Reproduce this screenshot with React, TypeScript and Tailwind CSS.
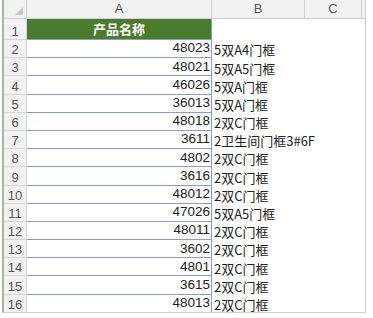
import React from 'react';

const rows: [string, string][] = [
  ['48023', '5双A4门框'],
  ['48021', '5双A5门框'],
  ['46026', '5双A门框'],
  ['36013', '5双A门框'],
  ['48018', '2双C门框'],
  ['3611', '2卫生间门框3#6F'],
  ['4802', '2双C门框'],
  ['3616', '2双C门框'],
  ['48012', '2双C门框'],
  ['47026', '5双A5门框'],
  ['48011', '2双C门框'],
  ['3602', '2双C门框'],
  ['4801', '2双C门框'],
  ['3615', '2双C门框'],
  ['48013', '2双C门框'],
];

const num = { fontFamily: '"Liberation Sans", Arial, sans-serif' };
const cjk = { fontFamily: '"Noto Sans CJK SC", "Liberation Sans", sans-serif' };

function RowNum({ n, h }: { n: number; h: string }) {
  return (
    <div
      className={`w-[23px] ${h} shrink-0 bg-[#f2f2f2] border-r border-b border-[#d6d6d6] flex items-end justify-center text-[13px] leading-[15px] text-[#555]`}
      style={num}
    >
      {n}
    </div>
  );
}

export default function App() {
  return (
    <div className="w-[373px] h-[318px] bg-white overflow-hidden">
      <div className="ml-[2px] w-[364px] h-[313px] border-l-2 border-[#a8b8a0] border-r border-b border-r-[#d0d0d0] border-b-[#d0d0d0] flex flex-col overflow-hidden">
        {/* header */}
        <div className="flex h-[19px] shrink-0 bg-[#f2f2f2] border-b border-[#d0d0d0] text-[13px] text-[#555]" style={num}>
          <div className="w-[23px] border-r border-[#d0d0d0] relative">
            <div className="absolute right-[3px] bottom-[3px] w-0 h-0 border-l-[8px] border-l-transparent border-b-[8px] border-b-[#c8c8c8]" />
          </div>
          <div className="w-[185px] border-r border-[#d0d0d0] flex items-center justify-center">A</div>
          <div className="w-[93px] border-r border-[#d0d0d0] flex items-center justify-center">B</div>
          <div className="w-[57px] border-r border-[#d0d0d0] flex items-center justify-center">C</div>
        </div>
        {/* row 1 */}
        <div className="flex h-[21px] shrink-0">
          <RowNum n={1} h="h-[21px]" />
          <div
            className="w-[185px] bg-[#4b7b2c] border-r border-b border-[#8d9bc9] flex items-center justify-center text-white font-bold text-[13px]"
            style={cjk}
          >
            产品名称
          </div>
        </div>
        {rows.map(([a, b], i) => (
          <div key={i} className="flex h-[18.2px] shrink-0">
            <RowNum n={i + 2} h="h-[18.2px]" />
            <div
              className="w-[185px] border-r border-b border-[#8d9bc9] flex items-center justify-end pr-[1px] text-[13.5px] text-[#222]"
              style={num}
            >
              {a}
            </div>
            <div className="pl-[2px] pt-[2px] flex items-center whitespace-nowrap text-[13px] text-[#222]" style={cjk}>
              {b}
            </div>
          </div>
        ))}
      </div>
    </div>
  );
}
